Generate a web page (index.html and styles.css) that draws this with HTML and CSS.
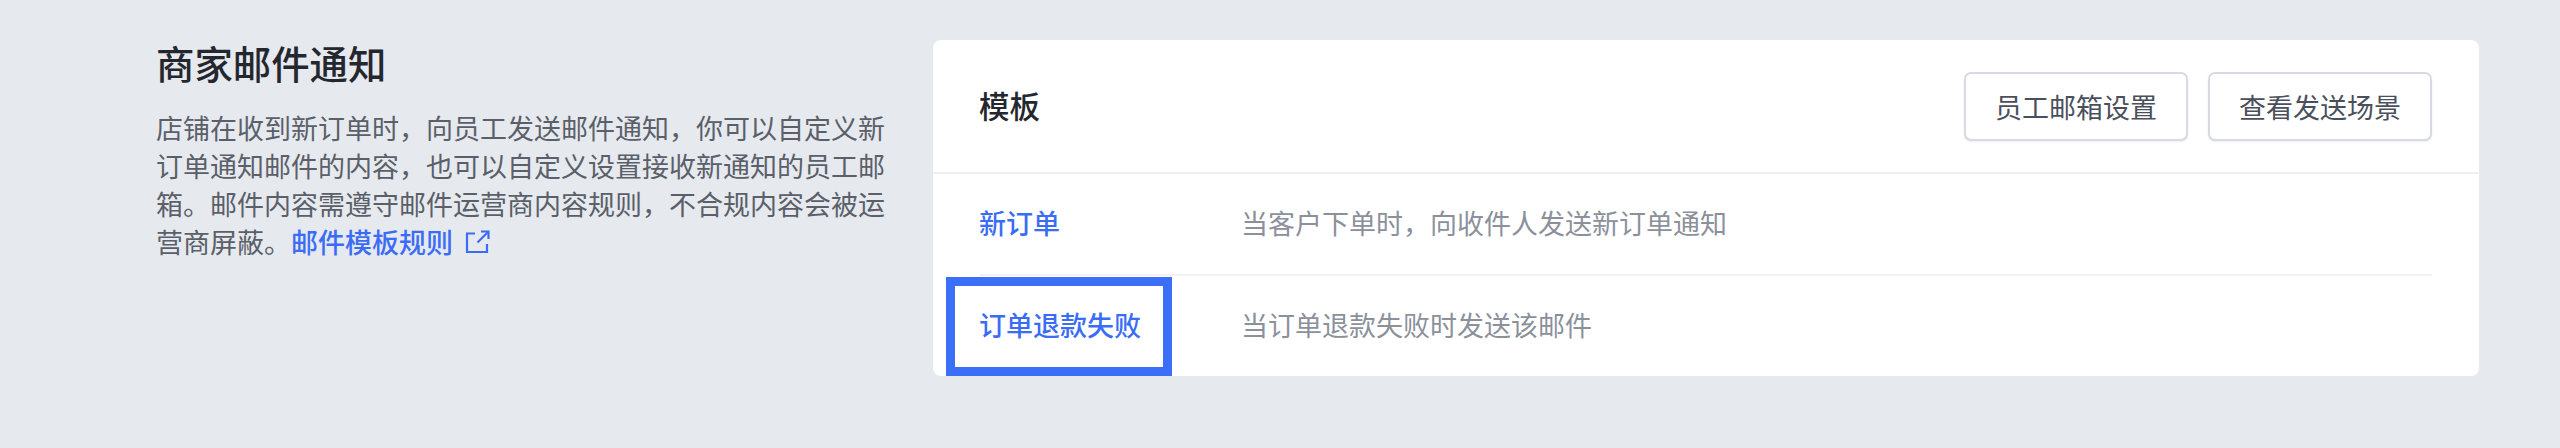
FILE: index.html
```html
<!DOCTYPE html>
<html lang="zh-CN">
<head>
<meta charset="utf-8">
<title>商家邮件通知</title>
<link rel="stylesheet" href="styles.css">
</head>
<body>
<main class="page">
  <section class="intro">
    <h1 class="intro-title">商家邮件通知</h1>
    <p class="intro-text">店铺在收到新订单时&#xFF0C;向员工发送邮件通知&#xFF0C;你可以自定义新订单通知邮件的内容&#xFF0C;也可以自定义设置接收新通知的员工邮箱。邮件内容需遵守邮件运营商内容规则&#xFF0C;不合规内容会被运营商屏蔽。<a class="link" href="#">邮件模板规则<svg class="link-icon" viewBox="0 0 25 24" fill="none" stroke="currentColor" stroke-width="2.2"><path d="M10 3.5H2v18.5h20v-8"/><path d="M16 1.5h7.5v7.5"/><path d="M23 2L12.5 12.5"/></svg></a></p>
  </section>
  <section class="card">
    <header class="card-head">
      <h2 class="card-title">模板</h2>
      <div class="actions">
        <button class="btn" type="button">员工邮箱设置</button>
        <button class="btn" type="button">查看发送场景</button>
      </div>
    </header>
    <ul class="rows">
      <li class="row"><a class="row-name" href="#">新订单</a><span class="row-desc">当客户下单时&#xFF0C;向收件人发送新订单通知</span></li>
      <li class="row"><a class="row-name" href="#">订单退款失败</a><span class="row-desc">当订单退款失败时发送该邮件</span></li>
    </ul>
    <div class="highlight"></div>
  </section>
</main>
</body>
</html>
```
FILE: styles.css
```css
* { box-sizing: border-box; }
html, body { margin: 0; height: 100%; }
body {
  background: #e6e9ee;
  font-family: "Inter", "Noto Sans CJK SC", sans-serif;
  color: #51565f;
}
.page {
  display: flex;
  align-items: flex-start;
  gap: 45px;
  padding: 40px 81px 0 156px;
}
.intro { width: 732px; flex: none; }
.intro-title {
  margin: 4px 0 0;
  font-size: 38.4px;
  line-height: 42px;
  font-weight: 500;
  color: #24272e;
}
.intro-text {
  margin: 25px 0 0;
  font-size: 27px;
  line-height: 38px;
  color: #5a5f69;
}
.link { color: #3b6cf6; text-decoration: none; font-weight: 500; }
.link-icon { width: 25px; height: 24px; margin-left: 12px; vertical-align: -1px; }
.card {
  position: relative;
  width: 1546px;
  height: 336px;
  flex: none;
  background: #fff;
  border-radius: 8px;
  overflow: hidden;
}
.card-head {
  display: flex;
  align-items: center;
  justify-content: space-between;
  height: 134px;
  padding: 0 47px 0 46px;
  border-bottom: 2px solid #eef0f4;
}
.card-title {
  margin: 0 0 3px;
  font-size: 30.5px;
  font-weight: 500;
  color: #24272e;
}
.actions { display: flex; gap: 20px; }
.btn {
  width: 224px;
  height: 69px;
  padding: 0;
  background: #fff;
  border: 2px solid #d7dae3;
  border-radius: 7px;
  font: inherit;
  font-size: 27px;
  color: #4a4f5c;
  box-shadow: 0 1px 2px rgba(30, 40, 70, .08);
}
.rows { margin: 0; padding: 0 47px; list-style: none; }
.row {
  display: flex;
  align-items: center;
  height: 100px;
  padding-bottom: 4px;
  font-size: 27px;
}
.row + .row { height: 102px; padding-bottom: 3px; border-top: 2px solid #f0f2f6; }
.row-name { width: 262px; margin-left: -1px; flex: none; color: #3b6cf6; text-decoration: none; font-weight: 500; }
.row-desc { color: #8b909b; }
.highlight {
  position: absolute;
  left: 13px;
  top: 237px;
  width: 226px;
  height: 99px;
  border: 9px solid #3b6ff8;
}
```
